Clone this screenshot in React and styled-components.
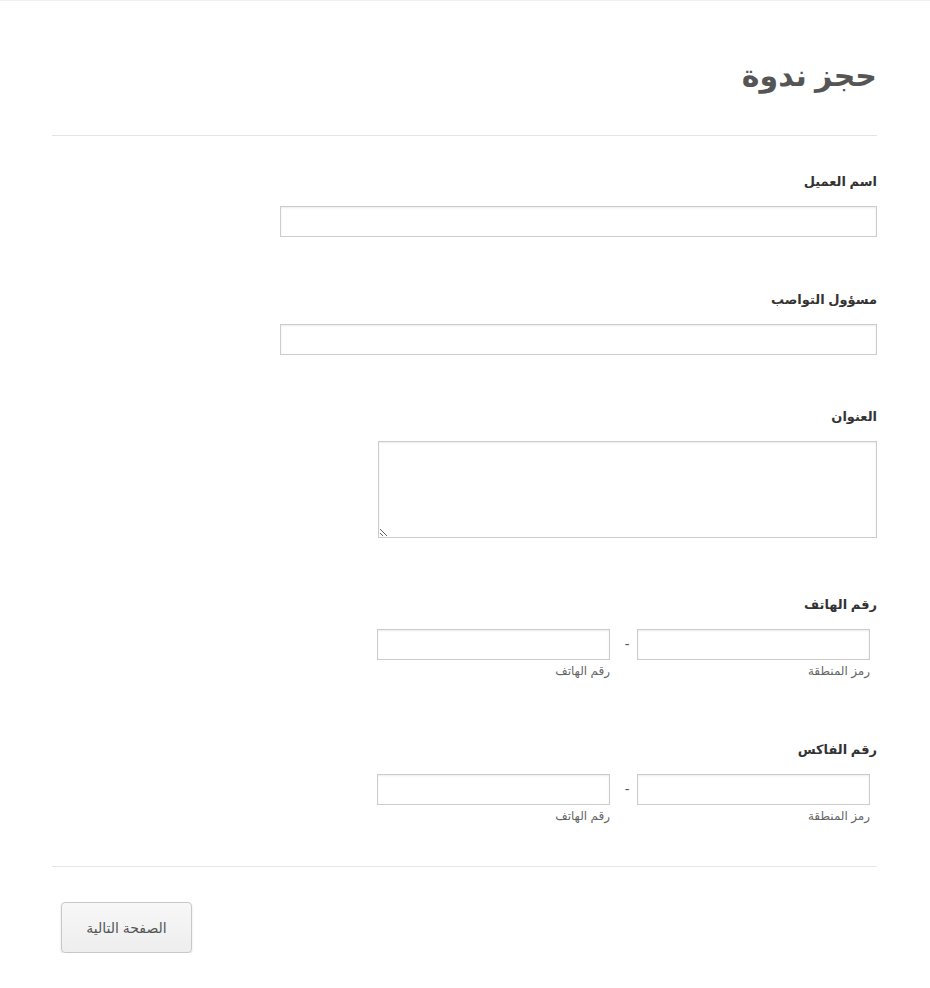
import React from "react";
import styled, { createGlobalStyle } from "styled-components";

const Global = createGlobalStyle`
  html, body { margin: 0; padding: 0; background: #fff; }
  body {
    border-top: 1px solid #f0f0f0;
    font-family: "Liberation Sans", Arial, "DejaVu Sans", sans-serif;
    color: #333;
  }
`;

const Form = styled.form`
  direction: rtl;
  width: 825px;
  margin-left: 52px;
  padding-top: 52px;
`;

const Header = styled.div`
  padding-bottom: 37px;
  border-bottom: 1px solid #e4e4e4;
`;

const Title = styled.h1`
  margin: 0;
  font-size: 30px;
  line-height: 45px;
  font-weight: bold;
  color: #555;
`;

const Field = styled.div`
  padding-top: ${(p) => p.$top || 37}px;
`;

const Label = styled.label`
  display: block;
  font-size: 13px;
  line-height: 20px;
  font-weight: bold;
  color: #333;
  margin-bottom: 14px;
`;

const TextInput = styled.input`
  display: block;
  box-sizing: border-box;
  width: ${(p) => p.$w}px;
  height: 31px;
  margin: 0;
  border: 1px solid #ccc;
  box-shadow: inset 0 1px 2px rgba(0, 0, 0, 0.08);
  background: #fff;
  padding: 4px 6px;
  font-size: 14px;
  font-family: inherit;
`;

const TextArea = styled.textarea`
  display: block;
  box-sizing: border-box;
  width: 499px;
  height: 97px;
  margin: 0;
  border: 1px solid #ccc;
  box-shadow: inset 0 1px 2px rgba(0, 0, 0, 0.08);
  padding: 4px 6px;
  font-family: inherit;
  font-size: 14px;
`;

const PhoneRow = styled.div`
  display: flex;
  align-items: flex-start;
  padding-right: 7px;
`;

const SubField = styled.div`
  display: flex;
  flex-direction: column;
`;

const Dash = styled.span`
  width: 27px;
  padding-left: 7px;
  box-sizing: border-box;
  text-align: center;
  font-size: 14px;
  line-height: 31px;
  color: #555;
`;

const SubLabel = styled.span`
  font-size: 12px;
  line-height: 14px;
  margin-top: 4px;
  color: #666;
`;

const Footer = styled.div`
  margin-top: 43px;
  border-top: 1px solid #e4e4e4;
  padding-top: 35px;
  display: flex;
  justify-content: flex-end;
  padding-left: 9px;
`;

const Button = styled.button`
  width: 131px;
  height: 51px;
  box-sizing: border-box;
  border: 1px solid #c8c8c8;
  border-radius: 4px;
  background: linear-gradient(#f7f7f7, #eeeeee);
  box-shadow: 0 1px 2px rgba(0, 0, 0, 0.15);
  font-family: inherit;
  font-size: 14px;
  color: #555;
  direction: rtl;
  cursor: pointer;
`;

function Phone({ label, top }) {
  return (
    <Field $top={top}>
      <Label>{label}</Label>
      <PhoneRow>
        <SubField>
          <TextInput $w={233} />
          <SubLabel>رمز المنطقة</SubLabel>
        </SubField>
        <Dash>-</Dash>
        <SubField>
          <TextInput $w={233} />
          <SubLabel>رقم الهاتف</SubLabel>
        </SubField>
      </PhoneRow>
    </Field>
  );
}

export default function App() {
  return (
    <>
      <Global />
      <Form onSubmit={(e) => e.preventDefault()}>
        <Header>
          <Title>حجز ندوة</Title>
        </Header>
        <Field $top={36}>
          <Label>اسم العميل</Label>
          <TextInput $w={597} />
        </Field>
        <Field $top={53}>
          <Label>مسؤول التواصب</Label>
          <TextInput $w={597} />
        </Field>
        <Field $top={52}>
          <Label>العنوان</Label>
          <TextArea />
        </Field>
        <Phone label="رقم الهاتف" top={57} />
        <Phone label="رقم الفاكس" top={62} />
        <Footer>
          <Button type="button">الصفحة التالية</Button>
        </Footer>
      </Form>
    </>
  );
}
